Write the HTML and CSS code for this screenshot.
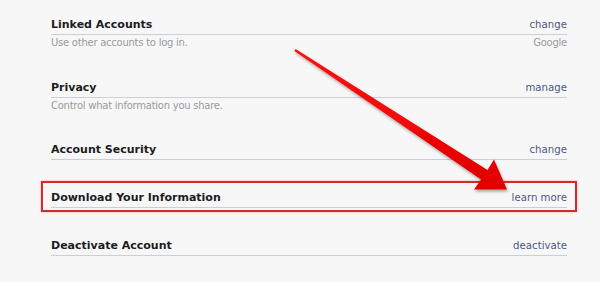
FILE: index.html
```html
<!DOCTYPE html>
<html lang="en">
<head>
    <meta charset="UTF-8">
    <meta name="viewport" content="width=device-width, initial-scale=1.0">
    <title>Account Settings</title>
    <link rel="stylesheet" href="styles.css">
</head>
<body>
    <div class="settings">
        <div class="row">
            <div class="row-head">
                <span class="row-title">Linked Accounts</span>
                <a href="#" class="row-action">change</a>
            </div>
            <div class="row-desc">
                <span>Use other accounts to log in.</span>
                <span>Google</span>
            </div>
        </div>

        <div class="row">
            <div class="row-head">
                <span class="row-title">Privacy</span>
                <a href="#" class="row-action">manage</a>
            </div>
            <div class="row-desc">
                <span>Control what information you share.</span>
            </div>
        </div>

        <div class="row">
            <div class="row-head">
                <span class="row-title">Account Security</span>
                <a href="#" class="row-action">change</a>
            </div>
        </div>

        <div class="row row-highlight">
            <div class="row-head">
                <span class="row-title">Download Your Information</span>
                <a href="#" class="row-action">learn more</a>
            </div>
        </div>

        <div class="row">
            <div class="row-head">
                <span class="row-title">Deactivate Account</span>
                <a href="#" class="row-action">deactivate</a>
            </div>
        </div>
    </div>

    <!-- Annotation arrow drawn over the page -->
    <svg class="arrow" width="600" height="282" viewBox="0 0 600 282">
        <defs>
            <filter id="arrow-shadow" x="-10%" y="-10%" width="130%" height="130%">
                <feDropShadow dx="1" dy="2" stdDeviation="1.5" flood-color="#000" flood-opacity="0.35"/>
            </filter>
            <linearGradient id="arrow-fill" x1="0" y1="0" x2="0" y2="1">
                <stop offset="0" stop-color="#ff1010"/>
                <stop offset="1" stop-color="#e00000"/>
            </linearGradient>
        </defs>
        <polygon filter="url(#arrow-shadow)" fill="url(#arrow-fill)"
            points="295.6,49 487.5,170 494,159.5 507,189.5 474,189.5 481,179.5 294.4,51"/>
    </svg>
</body>
</html>
```

FILE: styles.css
```css
body {
    margin: 0;
    background-color: #f7f7f8;
    font-family: "DejaVu Sans", sans-serif;
    font-size: 11px;
    color: #222;
}

.settings {
    width: 516px;
    margin-left: 51px;
    padding-top: 18px;
    display: flex;
    flex-direction: column;
    gap: 31px;
}

.row-head {
    display: flex;
    justify-content: space-between;
    align-items: baseline;
    line-height: 14px;
    padding-bottom: 2px;
    border-bottom: 1px solid #c9cddd;
}

.row-title {
    font-weight: bold;
    color: #1c1c1c;
}

.row-action {
    font-size: 10.2px;
    color: #4b5884;
    text-decoration: none;
}

.row-desc {
    display: flex;
    justify-content: space-between;
    line-height: 12.5px;
    padding-top: 2px;
    font-size: 10px;
    letter-spacing: -0.25px;
    color: #9a9a9a;
}

.row-highlight {
    margin: -10px -10px -4px;
    padding: 8px 8px 2px;
    border: 2px solid #d42a2a;
    box-shadow: 0 0 2px rgba(200, 0, 0, 0.35);
}

.arrow {
    position: absolute;
    top: 0;
    left: 0;
    pointer-events: none;
}
```
